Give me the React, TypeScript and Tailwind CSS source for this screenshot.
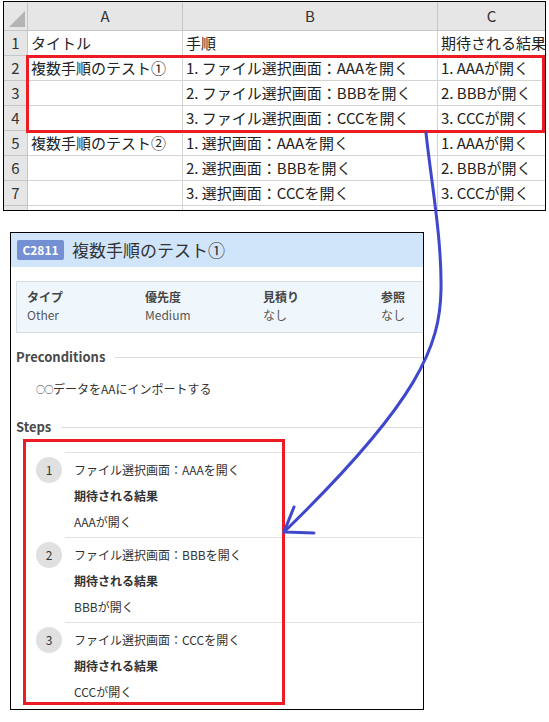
import React from 'react'

const font = { fontFamily: '"Noto Sans CJK JP", "Noto Sans", sans-serif' }

const sheetRows = [
  ['1', 'タイトル', '手順', '期待される結果'],
  ['2', '複数手順のテスト①', '1. ファイル選択画面：AAAを開く', '1. AAAが開く'],
  ['3', '', '2. ファイル選択画面：BBBを開く', '2. BBBが開く'],
  ['4', '', '3. ファイル選択画面：CCCを開く', '3. CCCが開く'],
  ['5', '複数手順のテスト②', '1. 選択画面：AAAを開く', '1. AAAが開く'],
  ['6', '', '2. 選択画面：BBBを開く', '2. BBBが開く'],
  ['7', '', '3. 選択画面：CCCを開く', '3. CCCが開く'],
  ['', '', '', ''],
]

const steps = [
  { action: 'ファイル選択画面：AAAを開く', result: 'AAAが開く' },
  { action: 'ファイル選択画面：BBBを開く', result: 'BBBが開く' },
  { action: 'ファイル選択画面：CCCを開く', result: 'CCCが開く' },
]

function Sheet() {
  return (
    <div className="mt-[1px] ml-[3px] w-[543px] h-[210px] border border-black overflow-hidden">
      <div className="grid grid-cols-[24px_155px_255px_1fr] text-[15px] text-[#222]">
        {/* header row */}
        <div className="relative h-[29px] bg-[#e6e6e6] border-r border-b border-[#c6c6c6]">
          <svg className="absolute left-0 top-0" width="24" height="29">
            <polygon points="5,25 21,9 21,25" fill="#b4b4b4" />
          </svg>
        </div>
        {['A', 'B', 'C'].map((c, i) => (
          <div
            key={c}
            className={`h-[29px] bg-[#e6e6e6] border-b border-[#c6c6c6] flex items-center justify-center text-[#333] ${i < 2 ? 'border-r' : ''}`}
          >
            {c}
          </div>
        ))}
        {sheetRows.map((r, idx) => (
          <React.Fragment key={idx}>
            <div className="h-[25px] bg-[#e6e6e6] border-r border-b border-[#c6c6c6] flex items-center justify-center text-[#333]">
              {r[0]}
            </div>
            <div className="h-[25px] border-r border-b border-[#d4d4d4] flex items-center pl-[3px] whitespace-nowrap overflow-hidden">
              {r[1]}
            </div>
            <div className="h-[25px] border-r border-b border-[#d4d4d4] flex items-center pl-[3px] whitespace-nowrap overflow-hidden">
              {r[2]}
            </div>
            <div className="h-[25px] border-b border-[#d4d4d4] flex items-center pl-[3px] whitespace-nowrap overflow-hidden">
              {r[3]}
            </div>
          </React.Fragment>
        ))}
      </div>
    </div>
  )
}

function SectionHeading({ title }: { title: string }) {
  return (
    <div className="flex items-center h-[20px] ml-[5px]">
      <span className="text-[13px] font-bold text-[#4a4a4a]">{title}</span>
      <div className="flex-1 h-px bg-[#dcdcdc] ml-[10px]" />
    </div>
  )
}

function Card() {
  return (
    <div className="ml-[10px] mt-[21px] w-[414px] h-[478px] border border-black overflow-hidden bg-white">
      {/* title bar */}
      <div className="h-[34px] bg-[#d0e4fa] flex items-center pl-[6px] gap-[8px]">
        <span className="h-[20px] w-[47px] rounded-[2px] bg-[#7590d2] text-white text-[12px] font-bold flex items-center justify-center">
          C2811
        </span>
        <span className="text-[17px] text-[#333]">複数手順のテスト①</span>
      </div>

      {/* properties */}
      <div className="mt-[14px] ml-[5px] border border-r-0 border-[#d8dde3] bg-[#f0f7fc] pl-[10px] pt-[6px] pb-[8px] grid grid-cols-[118px_118px_118px_1fr] text-[12px]">
        {[
          ['タイプ', 'Other'],
          ['優先度', 'Medium'],
          ['見積り', 'なし'],
          ['参照', 'なし'],
        ].map(([k, v]) => (
          <div key={k} className="flex flex-col">
            <span className="h-[18px] leading-[18px] font-bold text-[#444]">{k}</span>
            <span className="h-[18px] leading-[18px] text-[#555]">{v}</span>
          </div>
        ))}
      </div>

      <div className="mt-[14px]">
        <SectionHeading title="Preconditions" />
      </div>
      <div className="mt-[13px] ml-[25px] h-[18px] leading-[18px] text-[12px] text-[#333]">
        <span className="inline-block align-[1px] text-[9px] font-bold tracking-[-0.5px] text-[#444]">○○</span>
        データをAAにインポートする
      </div>

      <div className="mt-[19px]">
        <SectionHeading title="Steps" />
      </div>

      <div className="mt-[15px] pl-[25px] flex flex-col">
        {steps.map((s, i) => (
          <div key={i} className="flex">
            <div className="mt-[5px] w-[26px] h-[26px] rounded-full bg-[#e0e0e0] flex items-center justify-center text-[12px] text-[#333] shrink-0">
              {i + 1}
            </div>
            <div className="flex-1 ml-[3px] border-t border-[#e2e2e2] pl-[9px] pt-[4px] pb-[2px] text-[12px] text-[#333]">
              <div className="h-[26px] leading-[26px]">{s.action}</div>
              <div className="h-[26px] leading-[26px] font-bold">期待される結果</div>
              <div className="h-[26px] leading-[26px]">{s.result}</div>
            </div>
          </div>
        ))}
      </div>
    </div>
  )
}

export default function App() {
  return (
    <div className="relative w-[549px] h-[722px] bg-white overflow-hidden" style={font}>
      <Sheet />
      <Card />

      {/* red annotation boxes */}
      <div className="absolute left-[26px] top-[55px] w-[519px] h-[78px] border-[3px] border-[#ed1c24] pointer-events-none" />
      <div className="absolute left-[23px] top-[439px] w-[262px] h-[266px] border-[3px] border-[#ed1c24] pointer-events-none" />

      {/* hand-drawn arrow */}
      <svg className="absolute left-0 top-0 pointer-events-none" width="549" height="722">
        <path
          d="M426 133 C431 180, 442 240, 441 290 C440 345, 420 400, 284 532"
          fill="none"
          stroke="#3f48cc"
          strokeWidth="3"
          strokeLinecap="round"
        />
        <path
          d="M294 507 L284 532 L314 533"
          fill="none"
          stroke="#3f48cc"
          strokeWidth="3"
          strokeLinecap="round"
          strokeLinejoin="round"
        />
      </svg>
    </div>
  )
}
